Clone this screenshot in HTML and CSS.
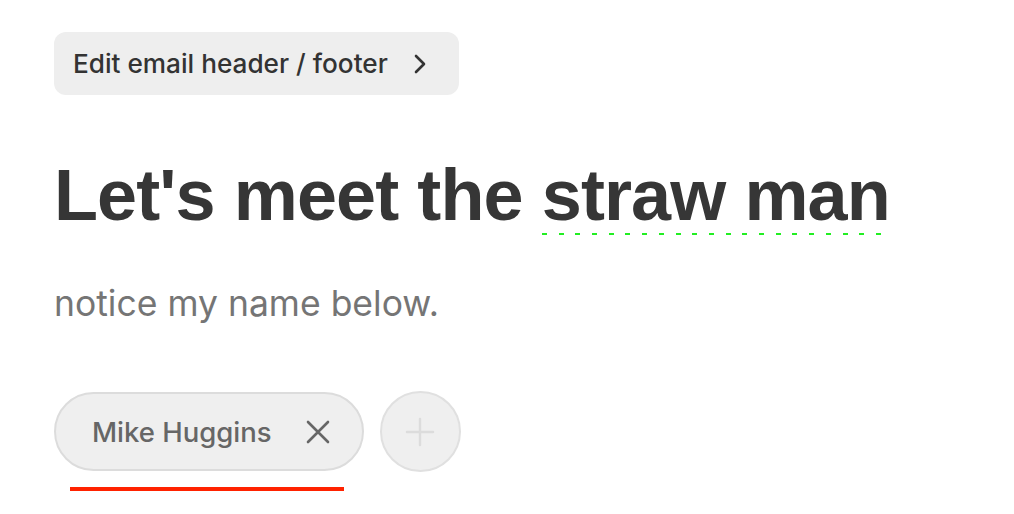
FILE: index.html
```html
<!DOCTYPE html>
<html lang="en">
<head>
    <meta charset="UTF-8">
    <meta name="viewport" content="width=device-width, initial-scale=1.0">
    <title>Straw man</title>
    <link rel="stylesheet" href="styles.css">
</head>
<body>
    <div class="page">
        <!-- Header / footer editor link -->
        <button class="edit-button">
            <span>Edit email header / footer</span>
            <svg class="chevron" width="20" height="20" viewBox="0 0 20 20">
                <path d="M6 2 L14 10 L6 18" fill="none" stroke="#333" stroke-width="2.6" stroke-linecap="round" stroke-linejoin="round"/>
            </svg>
        </button>

        <h1 class="headline">Let's meet the <span class="flagged">straw man</span></h1>

        <p class="intro-text">notice my name below.</p>

        <!-- Recipient chips -->
        <div class="chip-row">
            <div class="chip-wrap">
                <div class="chip">
                    <span>Mike Huggins</span>
                    <svg class="chip-close" width="24" height="24" viewBox="0 0 24 24">
                        <path d="M2 2 L22 22 M22 2 L2 22" stroke="#666" stroke-width="2.6" stroke-linecap="round"/>
                    </svg>
                </div>
                <div class="chip-mark"></div>
            </div>
            <button class="add-button">
                <svg width="30" height="30" viewBox="0 0 30 30">
                    <path d="M15 2 V28 M2 15 H28" stroke="#dcdcdc" stroke-width="2.4" stroke-linecap="round"/>
                </svg>
            </button>
        </div>
    </div>
</body>
</html>
```

FILE: styles.css
```css
body {
    margin: 0;
    background: #fff;
    font-family: 'Inter', 'Noto Sans', sans-serif;
    color: #333;
}

.page {
    padding: 32px 54px;
}

.edit-button {
    display: flex;
    align-items: center;
    gap: 22px;
    height: 63px;
    padding: 0 29px 0 19px;
    border: none;
    border-radius: 12px;
    background-color: #eeeeee;
    font-family: 'Inter', sans-serif;
    font-size: 26.2px;
    font-weight: 500;
    color: #333;
    cursor: pointer;
}

.chevron {
    display: block;
}

.headline {
    margin: 58px 0 0;
    font-family: 'Liberation Sans', Arial, sans-serif;
    font-size: 72px;
    font-weight: bold;
    line-height: 84px;
    color: #363636;
    letter-spacing: -0.9px;
}

.flagged {
    padding-bottom: 0;
    background-image: repeating-linear-gradient(90deg, #22ee22 0 5px, transparent 5px 16.7px);
    background-size: 100% 2px;
    background-position: 0 100%;
    background-repeat: no-repeat;
}

.intro-text {
    margin: 45px 0 0;
    font-size: 35.5px;
    line-height: 44px;
    color: #757575;
}

.chip-row {
    display: flex;
    align-items: flex-start;
    gap: 16px;
    margin-top: 66px;
}

.chip {
    box-sizing: border-box;
    display: flex;
    align-items: center;
    gap: 34px;
    height: 79px;
    padding: 0 32px 0 36px;
    border: 2px solid #dcdcdc;
    border-radius: 40px;
    background-color: #efefef;
    font-size: 27.5px;
    font-weight: 500;
    color: #666;
}

.chip-mark {
    height: 4px;
    margin: 16px 20px 0 16px;
    background-color: #ff2200;
}

.add-button {
    box-sizing: border-box;
    display: flex;
    align-items: center;
    justify-content: center;
    width: 81px;
    height: 81px;
    margin-top: -1px;
    padding: 0;
    border: 2px solid #e0e0e0;
    border-radius: 50%;
    background-color: #efefef;
    cursor: pointer;
}
```
